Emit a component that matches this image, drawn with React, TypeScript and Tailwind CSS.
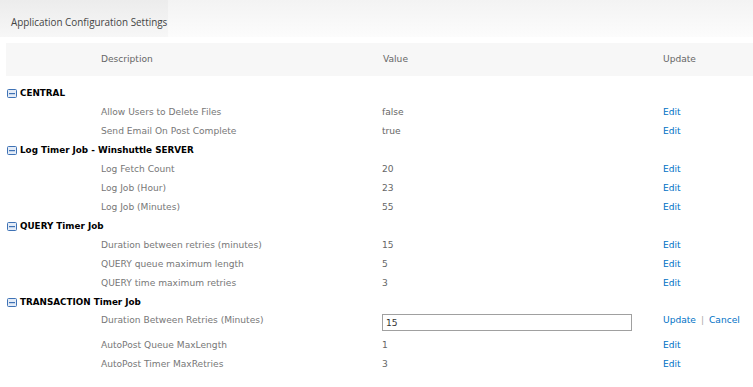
type Item = { label: string; value: string; editing?: boolean };
type Group = { name: string; items: Item[] };

const groups: Group[] = [
  {
    name: "CENTRAL",
    items: [
      { label: "Allow Users to Delete Files", value: "false" },
      { label: "Send Email On Post Complete", value: "true" },
    ],
  },
  {
    name: "Log Timer Job - Winshuttle SERVER",
    items: [
      { label: "Log Fetch Count", value: "20" },
      { label: "Log Job (Hour)", value: "23" },
      { label: "Log Job (Minutes)", value: "55" },
    ],
  },
  {
    name: "QUERY Timer Job",
    items: [
      { label: "Duration between retries (minutes)", value: "15" },
      { label: "QUERY queue maximum length", value: "5" },
      { label: "QUERY time maximum retries", value: "3" },
    ],
  },
  {
    name: "TRANSACTION Timer Job",
    items: [
      { label: "Duration Between Retries (Minutes)", value: "15", editing: true },
      { label: "AutoPost Queue MaxLength", value: "1" },
      { label: "AutoPost Timer MaxRetries", value: "3" },
    ],
  },
];

function MinusBox() {
  return (
    <svg width="10" height="9" viewBox="0 0 10 9" className="shrink-0">
      <rect x="0.5" y="0.5" width="9" height="8" rx="1" fill="#e4ecf7" stroke="#3f72b5" />
      <rect x="2" y="4" width="6" height="1.2" fill="#3f72b5" />
    </svg>
  );
}

export default function App() {
  return (
    <div className="w-[753px] h-[387px] bg-white font-['DejaVu_Sans',sans-serif] text-[9.1px] overflow-hidden">
      <div className="flex h-[37px] bg-gradient-to-b from-[#f3f3f3] to-[#fcfcfc]">
        <div className="w-[168px] flex items-center pl-[11px] pt-[8px] bg-gradient-to-b from-[#ececec] to-[#f7f7f7] text-[#444] font-['Open_Sans',sans-serif] text-[9.9px]">
          Application Configuration Settings
        </div>
      </div>

      <div className="ml-[6px] mt-[6px] h-[33px] flex items-center bg-[#f7f7f7] text-[#666]">
        <div className="w-[377px] pl-[95px]">Description</div>
        <div className="w-[280px]">Value</div>
        <div>Update</div>
      </div>

      <div className="pt-[8px]">
        {groups.map((g) => (
          <div key={g.name}>
            <div className="h-[19px] flex items-center gap-[3px] pl-[7px] font-bold text-[8.8px] text-black">
              <MinusBox />
              <span>{g.name}</span>
            </div>
            {g.items.map((it) =>
              it.editing ? (
                <div key={it.label} className="h-[24px] flex items-start text-[#777]">
                  <div className="w-[382px] pl-[101px] pt-[2px]">{it.label}</div>
                  <div className="w-[281px]">
                    <input
                      defaultValue={it.value}
                      className="w-[250px] h-[17px] mt-[2px] border border-[#a0a0a0] px-[3px] text-[9.1px] text-[#333] outline-none"
                    />
                  </div>
                  <div className="pt-[2px] flex gap-[5px] text-[#0072c6]">
                    <span>Update</span>
                    <span className="text-[#aaa]">|</span>
                    <span>Cancel</span>
                  </div>
                </div>
              ) : (
                <div key={it.label} className="h-[19px] flex items-center text-[#777]">
                  <div className="w-[382px] pl-[101px]">{it.label}</div>
                  <div className="w-[281px] text-[#666]">{it.value}</div>
                  <div className="text-[#0072c6]">Edit</div>
                </div>
              )
            )}
          </div>
        ))}
      </div>
    </div>
  );
}
